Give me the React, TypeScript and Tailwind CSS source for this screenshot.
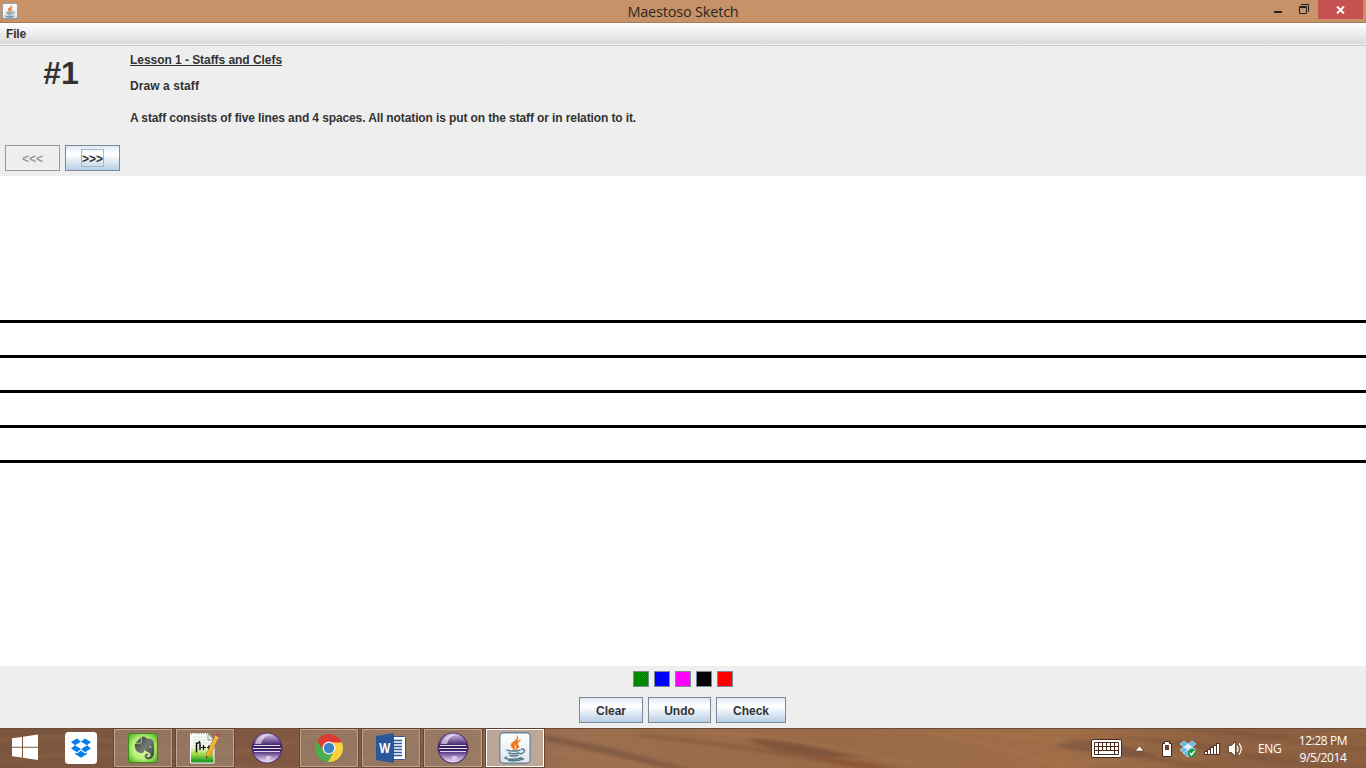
import type { ReactNode } from 'react';
import { FaEvernote } from 'react-icons/fa';

const swatches = ['bg-[#008b00]', 'bg-[#0000ff]', 'bg-[#ff00ff]', 'bg-black', 'bg-[#ff0000]'];

function JavaIcon({ size }: { size: number }) {
  return (
    <svg width={size} height={size} viewBox="0 0 32 32" className="block shrink-0">
      <defs>
        <linearGradient id="javaTile" x1="0" y1="0" x2="0" y2="1">
          <stop offset="0" stopColor="#fff" />
          <stop offset="1" stopColor="#e1e5e8" />
        </linearGradient>
      </defs>
      <rect x="0.8" y="0.8" width="30.4" height="30.4" rx="4" fill="url(#javaTile)" stroke="#6788a0" strokeWidth="1.4" />
      <path d="M18 3.500C20.500 8 12.500 9 12 13C12 15 14.500 16.500 15 18.500C16.500 15 15 14 15.500 12C16 10 21 8 18 3.500zM21.500 8C16 9.500 15 12 17 14C18 15.500 17 17 16 18C20.500 16 20.500 14.500 19 13C18 11.500 19 10 21.500 8z" fill="#ef7620" stroke="#ef7620" strokeWidth="0.600" />
      <path d="M8 17.500C7.500 19.500 19 19.500 21.500 17.800M22 17C27.500 16.500 26 21.500 20.500 22M9.500 20.500C10.500 22.200 18 22 20.500 20.800M10.500 23C11.500 24.500 17.500 24.400 19.500 23.200M8 25C0.500 27 17 28.500 23 25.500M9 28.300C15 29.300 21 28.700 25 26.500" fill="none" stroke="#50798f" strokeWidth="1.500" />
    </svg>
  );
}

function WindowsLogo() {
  return (
    <svg width="28" height="27" viewBox="0 0 28 27" className="-mt-px block" fill="#fff">
      <path d="M1 4.300L11 2.900V12.800H1zM12 2.700L27 0.500V12.800H12zM1 13.800H11V23.600L1 22.200zM12 13.800H27V26L12 23.800z" />
    </svg>
  );
}

function DropboxIcon() {
  return (
    <svg width="32" height="32" viewBox="0 0 32 32" className="block">
      <rect width="32" height="32" rx="3.500" fill="#fff" />
      <g fill="#087fe8">
        <path d="M12 6.500L16 9.700L10 13.300L6 10z" />
        <path d="M20 6.500L16 9.700L22 13.300L26 10z" />
        <path d="M10 13.300L16 17L12 20.300L6 16.600z" />
        <path d="M22 13.300L16 17L20 20.300L26 16.600z" />
        <path d="M10 20.400L12 21.600L16 18.400L20 21.600L22 20.400V22L16 25.700L10 22z" />
      </g>
    </svg>
  );
}

function EvernoteIcon() {
  return (
    <svg width="32" height="32" viewBox="0 0 32 32" className="block">
      <defs>
        <radialGradient id="leaf" r="0.7">
          <stop offset="0" stopColor="#e6ffc0" />
          <stop offset="0.55" stopColor="#b4f070" />
          <stop offset="1" stopColor="#3fa51f" />
        </radialGradient>
        <linearGradient id="hide" x1="0" y1="0" x2="1" y2="1">
          <stop offset="0" stopColor="#343936" />
          <stop offset="0.5" stopColor="#747a76" />
          <stop offset="1" stopColor="#383d39" />
        </linearGradient>
      </defs>
      <rect x="1.500" y="1.500" width="29" height="29" rx="2" fill="url(#leaf)" stroke="#378b17" />
      <g transform="translate(4.500 3)">
        <FaEvernote size={26} fill="url(#hide)" />
      </g>
    </svg>
  );
}

function NotepadIcon() {
  return (
    <svg width="32" height="32" viewBox="0 0 32 32" className="block">
      <defs>
        <linearGradient id="page" x1="0" y1="0" x2="0" y2="1">
          <stop offset="0" stopColor="#fff" />
          <stop offset="0.45" stopColor="#f4fae6" />
          <stop offset="0.7" stopColor="#a5dc45" />
          <stop offset="0.92" stopColor="#23a326" />
          <stop offset="1" stopColor="#168829" />
        </linearGradient>
      </defs>
      <path d="M1.500 1.500H19L25 8V31H1.500z" fill="url(#page)" stroke="#fff" />
      <path d="M4 5H19M4 8H23M4 11H24M4 14H24" stroke="#c3d1d1" strokeWidth="0.7" />
      <path d="M2 1.500H19" stroke="#8a9290" strokeWidth="1.500" strokeDasharray="1 1.500" />
      <path d="M19 2V8H25z" fill="#eee" stroke="#777" strokeWidth="0.700" />
      <path d="M7.500 20.500V10.500M7.500 12L10.500 10L11 12V18" fill="none" stroke="#111" strokeWidth="1.500" />
      <path d="M12 15.500H17M14.500 13V18M18 15.500H22M20 13V18" stroke="#111" strokeWidth="1.200" />
      <path d="M26.500 3L30 5L21 23.500L17 26.500L17.500 22z" fill="#f5b52e" stroke="#a66c22" strokeWidth="0.600" />
      <path d="M26.500 3.500L28 0.500L31.500 2L30 5.500z" fill="#b65a4c" />
      <path d="M26 4.500L29.500 6.500" stroke="#d5d5d5" />
      <path d="M17 26.500L17.300 24L19 25z" fill="#333" />
    </svg>
  );
}

function EclipseIcon() {
  return (
    <svg width="32" height="32" viewBox="0 0 32 32" className="block">
      <defs>
        <linearGradient id="eclipse" x1="0" y1="0" x2="0" y2="1">
          <stop offset="0" stopColor="#d8cae7" />
          <stop offset="0.23" stopColor="#8a6bab" />
          <stop offset="0.42" stopColor="#39205e" />
          <stop offset="0.6" stopColor="#44276d" />
          <stop offset="0.78" stopColor="#a384c2" />
          <stop offset="1" stopColor="#f5effa" />
        </linearGradient>
      </defs>
      <circle cx="16" cy="16" r="15" fill="url(#eclipse)" stroke="#54366e" strokeWidth="1.100" />
      <path d="M5 9Q11 1 21 3Q12 3 10 12H4z" fill="#fff" opacity="0.55" />
      <path d="M3 13.500H29M2 16.500H30M3 19.500H29" stroke="#e3d8ee" strokeWidth="1.200" />
      <path d="M15 24H20V26Q18 28 15 28z" fill="#fff" opacity="0.500" />
    </svg>
  );
}

function ChromeIcon() {
  return (
    <svg width="32" height="32" viewBox="0 0 32 32" className="block">
      <circle cx="16" cy="16" r="14" fill="#4bad4d" />
      <path d="M3.900 9A14 14 0 0 1 28.100 9L29 11.500H16L10.500 18.500z" fill="#df3932" />
      <path d="M16 10.500H28.900A14 14 0 0 1 15 30L21.500 19z" fill="#fbd13b" />
      <circle cx="16" cy="16" r="6.500" fill="#f5f5f2" />
      <circle cx="16" cy="16" r="5.200" fill="#3e82c6" />
    </svg>
  );
}

function WordIcon() {
  return (
    <svg width="32" height="32" viewBox="0 0 32 32" className="block">
      <path d="M17 4.500H29.500Q30.500 4.500 30.500 5.500V26.500Q30.500 27.500 29.500 27.500H17z" fill="#fff" stroke="#2b579a" />
      <path d="M18 8.500H27M18 11.500H27M18 14.500H27M18 17.500H27M18 20.500H27M18 23.500H27" stroke="#2b579a" strokeWidth="1.300" />
      <path d="M1 4L19 1V31L1 28z" fill="#2b579a" />
      <text x="9.800" y="21" fill="#fff" textAnchor="middle" textLength="11" lengthAdjust="spacingAndGlyphs" className="font-['Open_Sans'] text-[14px] font-bold">W</text>
    </svg>
  );
}

function MetalButton({ children, className }: { children: ReactNode; className: string }) {
  return (
    <button className={`flex h-[26px] items-center justify-center border border-[#7a8a99] bg-[linear-gradient(to_bottom,#dde8f3_0%,#ffffff_30%,#ffffff_36%,#b8cfe5_100%)] ${className}`}>
      {children}
    </button>
  );
}

function Task({ children, kind }: { children: ReactNode; kind: 'plain' | 'open' | 'active' }) {
  const look =
    kind === 'plain'
      ? 'border-transparent'
      : kind === 'open'
        ? 'border-[#c1a58f] bg-[#a8917f]/50 outline outline-[#5a3b29]/70'
        : 'border-white bg-[#c4b1a3]/85 outline outline-[#5a3b29]/70';
  return <div className={`flex h-[38px] w-[58px] shrink-0 items-center justify-center border ${look}`}>{children}</div>;
}

function Wood() {
  return (
    <svg width="1366" height="40" viewBox="0 0 1366 40" className="absolute inset-0">
      <defs>
        <linearGradient id="wood">
          <stop offset="0" stopColor="#7b553e" />
          <stop offset="0.25" stopColor="#825a41" />
          <stop offset="0.36" stopColor="#8c634a" />
          <stop offset="0.42" stopColor="#9c6f50" />
          <stop offset="0.6" stopColor="#9a6a48" />
          <stop offset="0.78" stopColor="#9f6e47" />
          <stop offset="0.9" stopColor="#8c6042" />
          <stop offset="1" stopColor="#8b5f40" />
        </linearGradient>
        <filter id="soft" filterUnits="userSpaceOnUse" x="-20" y="-20" width="1406" height="80">
          <feGaussianBlur stdDeviation="5 1.8" />
        </filter>
      </defs>
      <rect width="1366" height="40" fill="url(#wood)" />
      <g filter="url(#soft)">
        <path d="M540 7Q590 14 630 25T695 42L660 40Q600 24 540 11z" fill="#6b4b3a" opacity="0.550" />
        <path d="M640 5Q710 13 760 20T900 42L850 38Q750 21 640 9z" fill="#754b35" opacity="0.450" />
        <path d="M750 10Q790 13 820 20T865 28Q830 32 788 24T750 10z" fill="#69442f" opacity="0.550" />
        <path d="M800 30Q850 28 900 41H860z" fill="#87502e" opacity="0.550" />
        <path d="M1056 19L1068 12L1110 14L1165 30L1220 42L1120 28z" fill="#68483a" opacity="0.550" />
        <path d="M1110 8Q1190 10 1270 27T1370 36V42Q1270 38 1200 22z" fill="#704a35" opacity="0.350" />
        <path d="M1170 0Q1260 2 1370 19V23Q1270 12 1170 0z" fill="#704a35" opacity="0.350" />
        <g fill="none" stroke="#b47e55" strokeWidth="2" opacity="0.350">
          <path d="M700 4Q770 7 840 21T920 36M550 25Q610 28 670 42M930 5Q1000 17 1060 39M960 3Q1030 8 1090 18" />
          <path d="M1060 36Q1180 31 1280 14T1370 5M1120 42Q1220 25 1300 20T1370 16" />
          <path d="M0 12Q70 4 150 19T300 12T450 20T540 10M0 35Q100 15 200 34T390 23" />
        </g>
      </g>
      <path d="M0 .5H1366" stroke="#6a4c38" />
    </svg>
  );
}

function Tray() {
  return (
    <svg width="160" height="24" viewBox="1089 736 160 24" className="block shrink-0">
      <rect x="1091.500" y="739.500" width="30" height="18" rx="1.500" fill="#fff" stroke="#4a2c1e" />
      <path d="M1094.500 742.500H1118.500V754.500H1094.500zM1094 746.500H1119M1094 750.500H1119M1098.500 742V755M1102.500 742V750M1106.500 742V750M1110.500 742V750M1114.500 742V755" fill="none" stroke="#4a2c1e" />
      <path d="M1135 751L1139.500 746L1144 751z" fill="#fff" stroke="#583c2b" strokeWidth="0.700" />
      <path d="M1164.500 741.500H1169.500V743.500H1171.500V756.500H1162.500V743.500H1164.500z" fill="#fff" stroke="#422719" />
      <path d="M1165 745H1169V750H1165z" fill="#6a432d" />
      <g fill="#62b7ee" stroke="#e4f6ff" strokeWidth="0.600">
        <path d="M1184 741L1188 744L1184 747L1180 744zM1192 741L1196 744L1192 747L1188 744zM1184 747L1188 750L1184 753L1180 750zM1192 747L1196 750L1192 753L1188 750z" />
        <path d="M1188 744L1192 747L1188 750L1184 747z" fill="#dbf3ff" />
        <path d="M1183 753L1188 750L1191 754L1188 757z" />
      </g>
      <circle cx="1192" cy="753" r="4" fill="#159b42" />
      <path d="M1190 753L1191.500 755L1194.500 751" fill="none" stroke="#fff" strokeWidth="1.400" />
      <path d="M1204 751H1207V749H1210V747H1213V745H1216V743H1220V755H1204z" fill="#4e3020" />
      <path d="M1205 752H1207V754H1205zM1208 750H1210V754H1208zM1211 748H1213V754H1211zM1214 746H1216V754H1214zM1217 744H1219V754H1217z" fill="#fff" />
      <path d="M1228.500 745.500H1231.500L1235.500 741.500V756.500L1231.500 752.500H1228.500z" fill="#fff" stroke="#4e3020" strokeWidth="0.800" />
      <path d="M1237 746Q1239 749 1237 752M1239 743.500Q1243.500 749 1239 754.500" fill="none" stroke="#fff" strokeWidth="1.200" />
    </svg>
  );
}

export default function App() {
  return (
    <div className="flex h-[768px] w-[1366px] flex-col overflow-hidden bg-[#eeeeee] font-['Liberation_Sans',sans-serif] text-[12px] font-bold text-[#333]">
      <header className="grid h-[23px] shrink-0 grid-cols-[1fr_auto_1fr] border-b border-[#a97c59] bg-[#c79267]">
        <div className="pt-[3px] pl-[2px]"><JavaIcon size={16} /></div>
        <h1 className="font-['Open_Sans','Noto_Sans',sans-serif] text-[14.5px] leading-[23px] font-normal tracking-[-0.2px] text-[#2b2926]">Maestoso Sketch</h1>
        <div className="flex justify-end">
          <svg width="44" height="19" viewBox="1274 0 44 19" className="block">
            <path d="M1274 11H1282V13H1274z" fill="#222" />
            <path d="M1299.500 6.500H1306.500V13.500H1299.500zM1299 7.500H1307M1301 4.500H1308.500V12" fill="none" stroke="#222" />
          </svg>
          <div className="mr-[3px] flex h-[19px] w-[45px] items-center justify-center bg-[#c75050]">
            <svg width="9" height="8" viewBox="0 0 9 8"><path d="M1 .5L8 7.500M8 .5L1 7.500" stroke="#fff" strokeWidth="1.900" /></svg>
          </div>
        </div>
      </header>
      <nav className="flex h-[23px] shrink-0 items-start border-b border-[#cccccc] bg-[linear-gradient(to_bottom,#fff,#dadada_21px,#eee_21px)] pl-[6px] leading-[23px] tracking-[-0.2px]">File</nav>
      <section className="flex h-[130px] shrink-0">
        <div className="flex w-[130px] flex-col pb-[5px]">
          <div className="mr-[8px] pt-[7px] text-center text-[32px] leading-[40px]">#1</div>
          <div className="mt-auto flex gap-[5px] pl-[5px]">
            <button disabled className="h-[26px] w-[55px] border border-[#999] pt-px text-[#999]">&lt;&lt;&lt;</button>
            <MetalButton className="w-[55px]"><span className="flex h-[18px] w-[23px] items-center justify-center border border-[#a3b8cc] pt-px">&gt;&gt;&gt;</span></MetalButton>
          </div>
        </div>
        <div className="pt-[6px] leading-[16px]">
          <h2 className="tracking-[-0.05px] underline decoration-1 underline-offset-[1px]">Lesson 1 - Staffs and Clefs</h2>
          <p className="mt-[10px] tracking-[0.08px]">Draw a staff</p>
          <p className="mt-[16px] tracking-[-0.112px] whitespace-nowrap">A staff consists of five lines and 4 spaces. All notation is put on the staff or in relation to it.</p>
        </div>
      </section>
      <main className="flex h-[490px] shrink-0 flex-col gap-[32px] bg-white pt-[144px]">
        {[0, 1, 2, 3, 4].map((line) => <div key={line} className="h-[3px] bg-black" />)}
      </main>
      <section className="flex h-[62px] shrink-0 flex-col items-center pt-[5px]">
        <div className="flex gap-[5px]">
          {swatches.map((color, i) => (
            <button key={color} className={`size-[16px] border border-[#7a8a99] ${color} ${i === 0 ? 'bg-[repeating-conic-gradient(#007b00_0_25%,#009b00_0_50%)] bg-[length:2px_2px]' : ''}`} />
          ))}
        </div>
        <div className="mt-[10px] mr-px flex gap-[5px]">
          <MetalButton className="w-[64px] pt-[2px]">Clear</MetalButton>
          <MetalButton className="w-[63px] pt-[2px]">Undo</MetalButton>
          <MetalButton className="w-[70px] pt-[2px]">Check</MetalButton>
        </div>
      </section>
      <footer className="relative h-[40px] shrink-0 overflow-hidden">
        <Wood />
        <div className="relative flex h-full items-center">
          <div className="w-[52px] pl-[11px]"><WindowsLogo /></div>
          <div className="flex gap-[4px]">
            <Task kind="plain"><DropboxIcon /></Task>
            <Task kind="open"><EvernoteIcon /></Task>
            <Task kind="open"><NotepadIcon /></Task>
            <Task kind="plain"><EclipseIcon /></Task>
            <Task kind="open"><ChromeIcon /></Task>
            <Task kind="open"><WordIcon /></Task>
            <Task kind="open"><EclipseIcon /></Task>
            <Task kind="active"><JavaIcon size={32} /></Task>
          </div>
          <div className="ml-auto flex items-center font-['Open_Sans','Noto_Sans',sans-serif] text-[12px] font-normal text-white">
            <Tray />
            <span className="w-[41px] pt-px pl-[9px] tracking-[-0.400px]">ENG</span>
            <div className="w-[76px] pt-[2px] pr-[10px] text-center leading-[17px] tracking-[-0.400px]">
              <div>12:28 PM</div>
              <div>9/5/2014</div>
            </div>
          </div>
        </div>
      </footer>
    </div>
  );
}
